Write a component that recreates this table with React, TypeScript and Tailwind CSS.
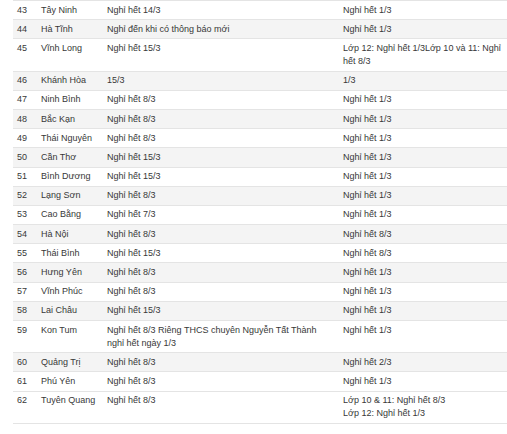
import React from 'react';

type Row = {
  no: number;
  province: string;
  thpt: React.ReactNode;
  grade: React.ReactNode;
  plain?: boolean;
};

const rows: Row[] = [
  { no: 43, province: 'Tây Ninh', thpt: 'Nghỉ hết 14/3', grade: 'Nghỉ hết 1/3' },
  { no: 44, province: 'Hà Tĩnh', thpt: 'Nghỉ đến khi có thông báo mới', grade: 'Nghỉ hết 1/3' },
  { no: 45, province: 'Vĩnh Long', thpt: 'Nghỉ hết 15/3', grade: 'Lớp 12: Nghỉ hết 1/3Lớp 10 và 11: Nghỉ hết 8/3' },
  { no: 46, province: 'Khánh Hòa', thpt: '15/3', grade: '1/3' },
  { no: 47, province: 'Ninh Bình', thpt: 'Nghỉ hết 8/3', grade: 'Nghỉ hết 1/3' },
  { no: 48, province: 'Bắc Kạn', thpt: 'Nghỉ hết 8/3', grade: 'Nghỉ hết 1/3' },
  { no: 49, province: 'Thái Nguyên', thpt: 'Nghỉ hết 8/3', grade: 'Nghỉ hết 1/3' },
  { no: 50, province: 'Cần Thơ', thpt: 'Nghỉ hết 15/3', grade: 'Nghỉ hết 1/3' },
  { no: 51, province: 'Bình Dương', thpt: 'Nghỉ hết 15/3', grade: 'Nghỉ hết 1/3' },
  { no: 52, province: 'Lạng Sơn', thpt: 'Nghỉ hết 8/3', grade: 'Nghỉ hết 1/3' },
  { no: 53, province: 'Cao Bằng', thpt: 'Nghỉ hết 7/3', grade: 'Nghỉ hết 1/3' },
  { no: 54, province: 'Hà Nội', thpt: 'Nghỉ hết 8/3', grade: 'Nghỉ hết 8/3' },
  { no: 55, province: 'Thái Bình', thpt: 'Nghỉ hết 15/3', grade: 'Nghỉ hết 8/3' },
  { no: 56, province: 'Hưng Yên', thpt: 'Nghỉ hết 8/3', grade: 'Nghỉ hết 1/3' },
  { no: 57, province: 'Vĩnh Phúc', thpt: 'Nghỉ hết 8/3', grade: 'Nghỉ hết 1/3' },
  { no: 58, province: 'Lai Châu', thpt: 'Nghỉ hết 15/3', grade: 'Nghỉ hết 1/3' },
  {
    no: 59,
    province: 'Kon Tum',
    thpt: 'Nghỉ hết 8/3 Riêng THCS chuyên Nguyễn Tất Thành nghỉ hết ngày 1/3',
    grade: 'Nghỉ hết 1/3',
  },
  { no: 60, province: 'Quảng Trị', thpt: 'Nghỉ hết 8/3', grade: 'Nghỉ hết 2/3' },
  { no: 61, province: 'Phú Yên', thpt: 'Nghỉ hết 8/3', grade: 'Nghỉ hết 1/3' },
  {
    no: 62,
    province: 'Tuyên Quang',
    thpt: 'Nghỉ hết 8/3',
    grade: (
      <>
        Lớp 10 &amp; 11: Nghỉ hết 8/3
        <br />
        Lớp 12: Nghỉ hết 1/3
      </>
    ),
    plain: true,
  },
];

export default function App() {
  return (
    <div
      className="w-[507px] h-[434px] overflow-hidden bg-white pl-[13px]"
      style={{ fontFamily: '"Liberation Sans", Arial, sans-serif' }}
    >
      <table className="w-[494px] table-fixed border-collapse text-[9px] leading-[13px] text-[#383838]">
        <colgroup>
          <col className="w-[24px]" />
          <col className="w-[66px]" />
          <col className="w-[236px]" />
          <col className="w-[168px]" />
        </colgroup>
        <tbody>
          {rows.map((r) => {
            const shaded = r.no % 2 === 0 && !r.plain;
            return (
              <tr
                key={r.no}
                className={`border-y border-[#e4e4e4] align-top ${shaded ? 'bg-[#f4f4f4]' : 'bg-white'}`}
              >
                <td className="px-1 py-[2.6px]">{r.no}</td>
                <td className="px-1 py-[2.6px]">{r.province}</td>
                <td className="px-1 py-[2.6px]">{r.thpt}</td>
                <td className="px-1 py-[2.6px]">{r.grade}</td>
              </tr>
            );
          })}
        </tbody>
      </table>
    </div>
  );
}
